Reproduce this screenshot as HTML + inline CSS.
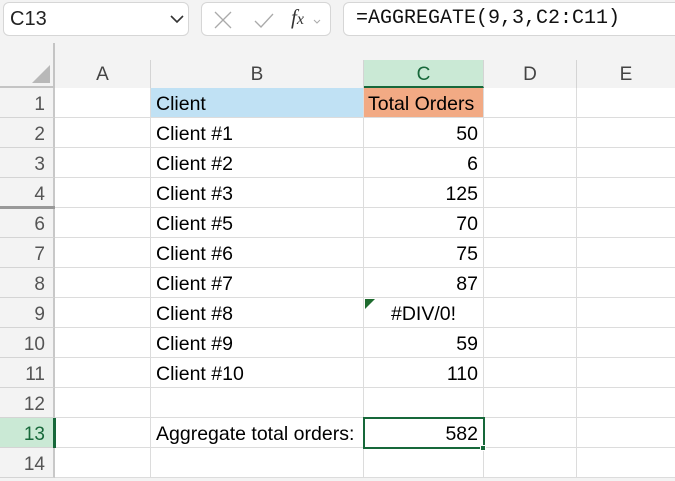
<!DOCTYPE html>
<html><head><style>
*{margin:0;padding:0;box-sizing:border-box}
body{width:675px;height:477px;overflow:hidden;background:#f3f3f3;font-family:"Liberation Sans",sans-serif;position:relative}
.a{position:absolute}
.box{position:absolute;background:#fff;border:1px solid #d6d6d6;border-radius:6px}
.ch{position:absolute;top:60px;height:28px;font-size:19px;color:#444;text-align:center;line-height:30px;border-right:1px solid #d4d4d4}
.rh{position:absolute;left:0;width:55px;height:30px;font-size:19px;color:#555;text-align:right;padding-right:8px;line-height:33px;border-bottom:1px solid #d4d4d4;border-right:2px solid #c8c8c8;background:#f3f3f3}
.c{position:absolute;height:30px;font-size:19.5px;color:#000;line-height:33px;padding:0 5px;border-right:1px solid #dcdcdc;border-bottom:1px solid #dcdcdc;background:#fff;white-space:nowrap}
.r{text-align:right}
</style></head><body>
<div class="box" style="left:3px;top:2px;width:186px;height:34px"></div>
<div class="a" style="left:10px;top:8px;font-size:20px;color:#222">C13</div>
<svg class="a" style="left:170px;top:14px" width="14" height="10"><path d="M1 2 L7 8 L13 2" stroke="#333" stroke-width="1.6" fill="none"/></svg>
<div class="box" style="left:201px;top:2px;width:130px;height:34px"></div>
<svg class="a" style="left:213px;top:10px" width="110" height="20"><path d="M2 2 L18 18 M18 2 L2 18" stroke="#aaa" stroke-width="1.3" fill="none"/><path d="M42 11 L48 17 L60 4" stroke="#aaa" stroke-width="1.3" fill="none"/><path d="M101 10 L104 13 L107 10" stroke="#aaa" stroke-width="1" fill="none"/></svg>
<div class="a" style="left:291px;top:5px;font-size:21px;font-style:italic;font-family:'Liberation Serif',serif;color:#333">f<span style="font-size:16px">x</span></div>
<div class="box" style="left:343px;top:2px;width:340px;height:34px"></div>
<div class="a" style="left:356px;top:7px;font-size:20px;font-family:'Liberation Mono',monospace;color:#111">=AGGREGATE(9,3,C2:C11)</div>
<div class="a" style="left:53px;top:43px;width:2px;height:45px;background:#c4c4c4"></div>
<svg class="a" style="left:30px;top:63px" width="22" height="22"><path d="M20 2 L20 20 L2 20 Z" fill="#b8b8b8"/></svg>
<div class="a" style="left:0;top:86px;width:55px;height:2px;background:#c4c4c4"></div>
<div class="ch" style="left:55px;width:96px">A</div>
<div class="ch" style="left:151px;width:213px">B</div>
<div class="ch" style="left:364px;width:120px;background:#cae9d5;color:#17683a;border-bottom:2px solid #17683a">C</div>
<div class="ch" style="left:484px;width:93px">D</div>
<div class="ch" style="left:577px;width:98px;border-right:none">E</div>
<div id="g"></div>
<script>
var rows=[[1,'Client','Total Orders'],[2,'Client #1','50'],[3,'Client #2','6'],[4,'Client #3','125'],[6,'Client #5','70'],[7,'Client #6','75'],[8,'Client #7','87'],[9,'Client #8','#DIV/0!'],[10,'Client #9','59'],[11,'Client #10','110'],[12,'',''],[13,'Aggregate total orders:','582'],[14,'','']];
var h='';
rows.forEach(function(x){var r=x[0];var t=r<=4?88+(r-1)*30:208+(r-6)*30;
var hs=r==13?'background:#cae9d5;color:#17683a;':'';
h+='<div class="rh" style="top:'+t+'px;'+hs+'">'+r+'</div>';
h+='<div class="c" style="left:55px;top:'+t+'px;width:96px"></div>';
var bb=r==1?'background:#c0e1f4;':'';
h+='<div class="c" style="left:151px;top:'+t+'px;width:213px;'+bb+'">'+x[1]+'</div>';
var cb=r==1?'background:#f2aa84;text-align:left;padding-left:4px;':'';
if(r==9)h+='<div class="c" style="left:364px;top:'+t+'px;width:120px;text-align:center">'+x[2]+'</div>';
else h+='<div class="c r" style="left:364px;top:'+t+'px;width:120px;'+cb+'">'+x[2]+'</div>';
h+='<div class="c" style="left:484px;top:'+t+'px;width:93px"></div>';
h+='<div class="c" style="left:577px;top:'+t+'px;width:98px;border-right:none"></div>';
});
document.getElementById('g').innerHTML=h;
</script>
<div class="a" style="left:0;top:206px;width:55px;height:3px;border-top:2px solid #999;border-bottom:1px solid #999"></div>
<svg class="a" style="left:365px;top:299px" width="12" height="12"><path d="M0 0 L10 0 L0 10 Z" fill="#1e6b2e"/></svg>
<div class="a" style="left:53px;top:418px;width:3px;height:30px;background:#17683a"></div>
<div class="a" style="left:363px;top:417px;width:122px;height:32px;border:2px solid #17683a"></div>
<div class="a" style="left:480px;top:445px;width:6px;height:6px;background:#17683a;border:1px solid #fff"></div>
</body></html>
